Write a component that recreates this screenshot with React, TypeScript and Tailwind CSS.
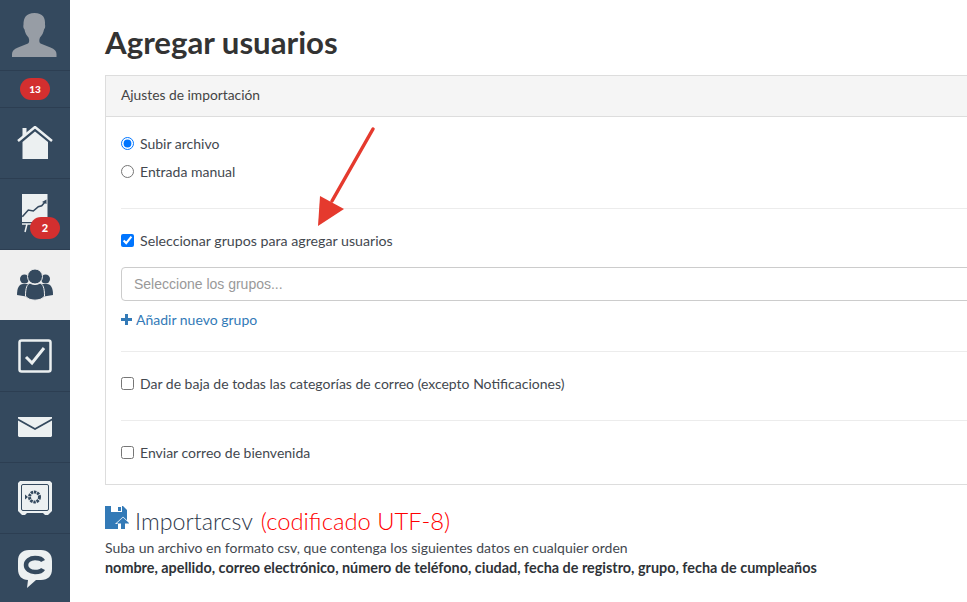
import React from "react";

const navRow = "flex items-center justify-center border-b border-[#2c3e52] bg-[#34495e]";

function Avatar() {
  return (
    <svg width="46" height="46" viewBox="0 0 46 46" fill="#979da5">
      <path d="M0 44v-3c0-3 2-5 6-6.500l10-4c1.500-1 1.500-4 .5-6-2-2-3.500-5-4-8-1-1-1.500-3-1-5C11.500 5 14 0 22.500 0S33.500 5 33 11.500c.5 2 0 4-1 5-.5 3-2 6-4 8-1 2-1 5 .5 6l10 4c4 1.500 6 3.500 6 6.500v3z" />
    </svg>
  );
}

function HomeIcon() {
  return (
    <svg width="36" height="34" viewBox="0 0 36 34">
      <path d="M5.500 2h4v6l-4 4z" fill="#ecf0f1" />
      <path d="M1 15 18 1l17 14" fill="none" stroke="#ecf0f1" strokeWidth="2.500" />
      <path d="M5.500 16 18 5.500 31 16v17H5.500z" fill="#ecf0f1" />
    </svg>
  );
}

function ChartIcon() {
  return (
    <svg width="28" height="40" viewBox="0 0 28 40">
      <path d="M1 0h25.500v28H1z" fill="#ecf0f1" />
      <path d="M1.300 22.700 7.300 16l5 1 5-4.300 3.400-1L24 8" fill="none" stroke="#34495e" strokeWidth="1.600" />
      <path d="M21 8l4.500-2.500V10z" fill="#34495e" />
      <path d="M1 30h10M6 30l-2 8" stroke="#ecf0f1" strokeWidth="1.500" fill="none" />
    </svg>
  );
}

function UsersIcon() {
  return (
    <svg width="36" height="32" viewBox="0 0 36 32" fill="#34495e">
      <circle cx="7.500" cy="10" r="4.500" />
      <circle cx="28.500" cy="10" r="4.500" />
      <path d="M0 26c0-7 2-11 6-11h5v11l-2 1.500z" />
      <path d="M36 26c0-7-2-11-6-11h-5v11l2 1.500z" />
      <circle cx="18" cy="7.500" r="7.500" stroke="#efefef" strokeWidth="1" />
      <path d="M8.500 27c0-8 1.500-12 4.500-13 3 2 7 2 10 0 3 1 4.500 5 4.500 13-3 5.500-16 5.500-19 0z" stroke="#efefef" strokeWidth="1" />
    </svg>
  );
}

function CheckIcon() {
  return (
    <svg width="34" height="34" viewBox="0 0 34 34" fill="none">
      <rect x="1.500" y="1.500" width="31" height="31" rx="2" stroke="#ecf0f1" strokeWidth="2.500" />
      <path d="M8 18l6 6L26 9" stroke="#ecf0f1" strokeWidth="3" />
    </svg>
  );
}

function MailIcon() {
  return (
    <svg width="34" height="20" viewBox="0 0 34 20" fill="#ecf0f1">
      <path d="M0 1.500 17 11 34 1.500V0H0z" />
      <path d="M0 3.500V19l1 1h32l1-1V3.500L17 13z" />
    </svg>
  );
}

function SafeIcon() {
  return (
    <svg width="34" height="34" viewBox="0 0 34 34">
      <path d="M2 0h30l2 2v28l-2 2-2 2h-3l-2-2H9l-2 2H4l-2-2-2-2V2z" fill="#ecf0f1" />
      <rect x="3.500" y="3.500" width="27" height="26" rx="1.500" fill="none" stroke="#34495e" strokeWidth="1" />
      <circle cx="16.500" cy="16" r="5" fill="none" stroke="#34495e" strokeWidth="3" strokeDasharray="2.400 .8" />
      <path d="M7 13.500l3 2.500-3 2.500z" fill="#34495e" />
    </svg>
  );
}

function ChatIcon() {
  return (
    <svg width="34" height="38" viewBox="0 0 34 38">
      <path d="M11 0h12c7 0 11 4 11 11v8c0 7-4 11-11 11h-5l-9 8 1-8C4 30 0 26 0 19v-8C0 4 4 0 11 0z" fill="#ecf0f1" />
      <path d="M25 11c-1-2-4-3-8-3-5 0-9 3-9 7s4 7 9 7c4 0 7-1 8-3" fill="none" stroke="#34495e" strokeWidth="4.500" />
    </svg>
  );
}

function SaveUpload() {
  return (
    <svg width="24" height="23" viewBox="0 0 24 23" fill="#337ab7">
      <path d="M0 0h18l4 4v11H13v8H0z" />
      <path d="M6 0h11v6H6z" fill="#fff" />
      <path d="M13 1h3v4h-3z" />
      <path d="M18 11.500l6.500 6h-4.500V23h-4v-5.500H11.500z" stroke="#fff" strokeWidth="1.200" paintOrder="stroke" />
    </svg>
  );
}

function Sidebar() {
  return (
    <nav className="flex h-[602px] w-[70px] shrink-0 flex-col bg-[#34495e]">
      <div className={`${navRow} h-[71px] pt-[2px]`}><Avatar /></div>
      <div className={`${navRow} h-[37px]`}>
        <span className="flex h-[22px] w-[30px] items-center justify-center rounded-[11px] bg-[#d32f2f] text-[10px] font-black text-white">13</span>
      </div>
      <div className={`${navRow} h-[71px]`}><HomeIcon /></div>
      <div className={`${navRow} relative h-[71px]`}>
        <ChartIcon />
        <span className="absolute left-[30px] top-[38px] flex h-[22px] w-[30px] items-center justify-center rounded-[11px] bg-[#d32f2f] text-[11px] font-black text-white">2</span>
      </div>
      <div className="flex h-[70px] items-center justify-center bg-[#efefef]"><UsersIcon /></div>
      <div className={`${navRow} h-[72px]`}><CheckIcon /></div>
      <div className={`${navRow} h-[71px]`}><MailIcon /></div>
      <div className={`${navRow} h-[71px]`}><SafeIcon /></div>
      <div className="flex flex-1 items-center justify-center pt-[2px]"><ChatIcon /></div>
    </nav>
  );
}

function Divider({ className }: { className: string }) {
  return <hr className={`border-0 border-t border-[#ececec] ${className}`} />;
}

export default function App() {
  return (
    <div className="flex h-[602px] w-[967px] overflow-hidden bg-white font-['Lato','Open_Sans',sans-serif] text-[14px] text-[#43484f]">
      <Sidebar />
      <main className="relative min-w-0 flex-1 pl-[35px]">
        <h1 className="mt-[22px] h-[53px] text-[31.200px] font-bold leading-[40px] text-[#333]">Agregar usuarios</h1>

        <section className="w-[900px] border border-[#ddd]">
          <div className="flex h-[41px] items-center border-b border-[#ddd] bg-[#f5f5f5] pb-[2px] pl-[15px] text-[13.800px] text-[#444]">Ajustes de importación</div>
          <div className="pl-[15px]">
            <label className="mt-[18px] flex h-[17px] items-center gap-[6px]">
              <input type="radio" name="mode" defaultChecked className="m-0 h-[13px] w-[13px]" />
              Subir archivo
            </label>
            <label className="mt-[11px] flex h-[17px] items-center gap-[6px]">
              <input type="radio" name="mode" className="m-0 h-[13px] w-[13px]" />
              Entrada manual
            </label>
            <Divider className="mt-[28px]" />
            <label className="mt-[23px] flex h-[17px] items-center gap-[6px] text-[14.200px]">
              <input type="checkbox" defaultChecked className="m-0 h-[13px] w-[13px]" />
              Seleccionar grupos para agregar usuarios
            </label>
            <input
              readOnly
              placeholder="Seleccione los grupos..."
              className="mt-[18px] block h-[34px] w-full rounded border border-[#ccc] px-3 font-['Liberation_Sans',sans-serif] text-[14px] placeholder:text-[#999]"
            />
            <a className="mt-[10px] flex h-[17px] items-center gap-[4px] text-[#337ab7]">
              <svg width="11" height="11" viewBox="0 0 11 11" fill="#337ab7"><path d="M4 0h3v4h4v3H7v4H4V7H0V4h4z" /></svg>
              Añadir nuevo grupo
            </a>
            <Divider className="mt-[23px]" />
            <label className="mt-[23px] flex h-[17px] items-center gap-[6px]">
              <input type="checkbox" className="m-0 h-[13px] w-[13px]" />
              Dar de baja de todas las categorías de correo (excepto Notificaciones)
            </label>
            <Divider className="mt-[28px]" />
            <label className="mt-[23px] mb-[23px] flex h-[17px] items-center gap-[6px]">
              <input type="checkbox" className="m-0 h-[13px] w-[13px]" />
              Enviar correo de bienvenida
            </label>
          </div>
        </section>

        <div className="mt-[21px] flex h-[28px] items-start gap-[6px]">
          <SaveUpload />
          <h2 className="mt-[2px] text-[23.300px] font-light leading-[26px] text-[#2f3a4c]">
            Importarcsv <span className="ml-[2px] text-[23.800px] text-[#ff0000]">(codificado UTF-8)</span>
          </h2>
        </div>
        <p className="mt-[4px] leading-[20px]">Suba un archivo en formato csv, que contenga los siguientes datos en cualquier orden</p>
        <p className="text-[14.400px] font-bold leading-[20px] text-[#2f3338]">nombre, apellido, correo electrónico, número de teléfono, ciudad, fecha de registro, grupo, fecha de cumpleaños</p>

        <svg className="absolute left-[245px] top-[125px]" width="65" height="105" viewBox="0 0 65 105" fill="none">
          <path d="M58 4 17 76" stroke="#e53a2e" strokeWidth="3.500" strokeLinecap="round" />
          <path d="M3 101 5 71 29 84z" fill="#e53a2e" />
        </svg>
      </main>
    </div>
  );
}
